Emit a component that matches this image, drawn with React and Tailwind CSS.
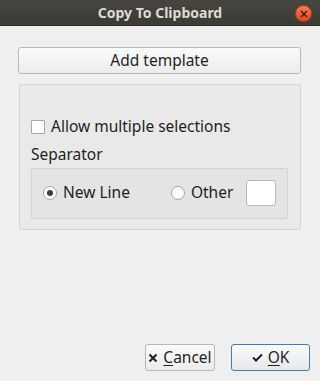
import { useState } from "react";

export default function App() {
  const [multi, setMulti] = useState(false);
  const [sep, setSep] = useState("newline");

  return (
    <div className="w-[320px] h-[381px] flex flex-col bg-[#efefef] text-[#1f1f1f] font-['Noto_Sans','Open_Sans',sans-serif] overflow-hidden">
      {/* title bar */}
      <div className="relative h-[26px] flex items-center justify-center bg-gradient-to-b from-[#46453f] to-[#3b3a35] border-b border-[#2c2b28]">
        <span className="text-[14px] font-bold text-[#dfdbd2] leading-none">Copy To Clipboard</span>
        <div className="absolute right-[8px] top-[5px] w-[17px] h-[17px] rounded-full bg-gradient-to-b from-[#f47a4e] to-[#e0481d] border border-[#b5401d] flex items-center justify-center">
          <svg width="8" height="8" viewBox="0 0 8 8">
            <path d="M1 1L7 7M7 1L1 7" stroke="#3a1a10" strokeWidth="1.4" />
          </svg>
        </div>
      </div>

      <div className="flex-1 flex flex-col px-[18px] pt-[21px] pb-[10px]">
        <button className="h-[27px] w-[283px] rounded-[3px] border border-[#b8b8b8] bg-gradient-to-b from-[#fbfbfb] to-[#ececec] text-[15.5px] leading-none">
          Add template
        </button>

        <div className="mt-[10px] ml-[1px] w-[282px] h-[146px] border border-[#d4d4d4] rounded-[2px] bg-[#e9e9e9] pl-[11px] pr-[12px] pt-[34px]">
          <label className="flex items-center gap-[6px] h-[16px]" onClick={() => setMulti(!multi)}>
            <span className="w-[14px] h-[14px] border border-[#a7a7a7] bg-white rounded-[1px]" />
            <span className="text-[15.5px] leading-none">Allow multiple selections</span>
          </label>
          <div className="mt-[12px] text-[15.5px] leading-none">Separator</div>
          <div className="mt-[5px] h-[51px] border border-[#d3d3d3] rounded-[2px] bg-[#e4e4e4] flex items-center pl-[11px] pr-[11px]">
            <label className="flex items-center gap-[6px]" onClick={() => setSep("newline")}>
              <span className="w-[14px] h-[14px] rounded-full border border-[#a3a3a3] bg-white flex items-center justify-center">
                {sep === "newline" && <span className="w-[6px] h-[6px] rounded-full bg-[#3c3c3c]" />}
              </span>
              <span className="text-[15.5px] leading-none">New Line</span>
            </label>
            <label className="ml-[41px] flex items-center gap-[6px]" onClick={() => setSep("other")}>
              <span className="w-[14px] h-[14px] rounded-full border border-[#a3a3a3] bg-white flex items-center justify-center">
                {sep === "other" && <span className="w-[6px] h-[6px] rounded-full bg-[#3c3c3c]" />}
              </span>
              <span className="text-[15.5px] leading-none">Other</span>
            </label>
            <div className="ml-auto w-[30px] h-[26px] rounded-[3px] border border-[#b9b9b9] bg-white" />
          </div>
        </div>

        <div className="mt-auto flex justify-end gap-[16px] mr-[-8px]">
          <button className="h-[27px] w-[70px] rounded-[3px] border border-[#b8b8b8] bg-gradient-to-b from-[#fbfbfb] to-[#ececec] flex items-center justify-center gap-[5px] text-[15.5px] leading-none">
            <svg width="10" height="10" viewBox="0 0 10 10">
              <path d="M1.5 1.5L8.5 8.5M8.5 1.5L1.5 8.5" stroke="#1f1f1f" strokeWidth="2" />
            </svg>
            <span><span className="underline underline-offset-2">C</span>ancel</span>
          </button>
          <button className="h-[27px] w-[79px] rounded-[3px] border border-[#3c7fb1] bg-gradient-to-b from-[#fbfbfb] to-[#e6e8ec] flex items-center justify-center gap-[5px] text-[15.5px] leading-none">
            <svg width="11" height="9" viewBox="0 0 11 9">
              <path d="M1 4.5L4 7.5L10 1.5" stroke="#1f1f1f" strokeWidth="2" fill="none" />
            </svg>
            <span><span className="underline underline-offset-2">O</span>K</span>
          </button>
        </div>
      </div>
    </div>
  );
}
